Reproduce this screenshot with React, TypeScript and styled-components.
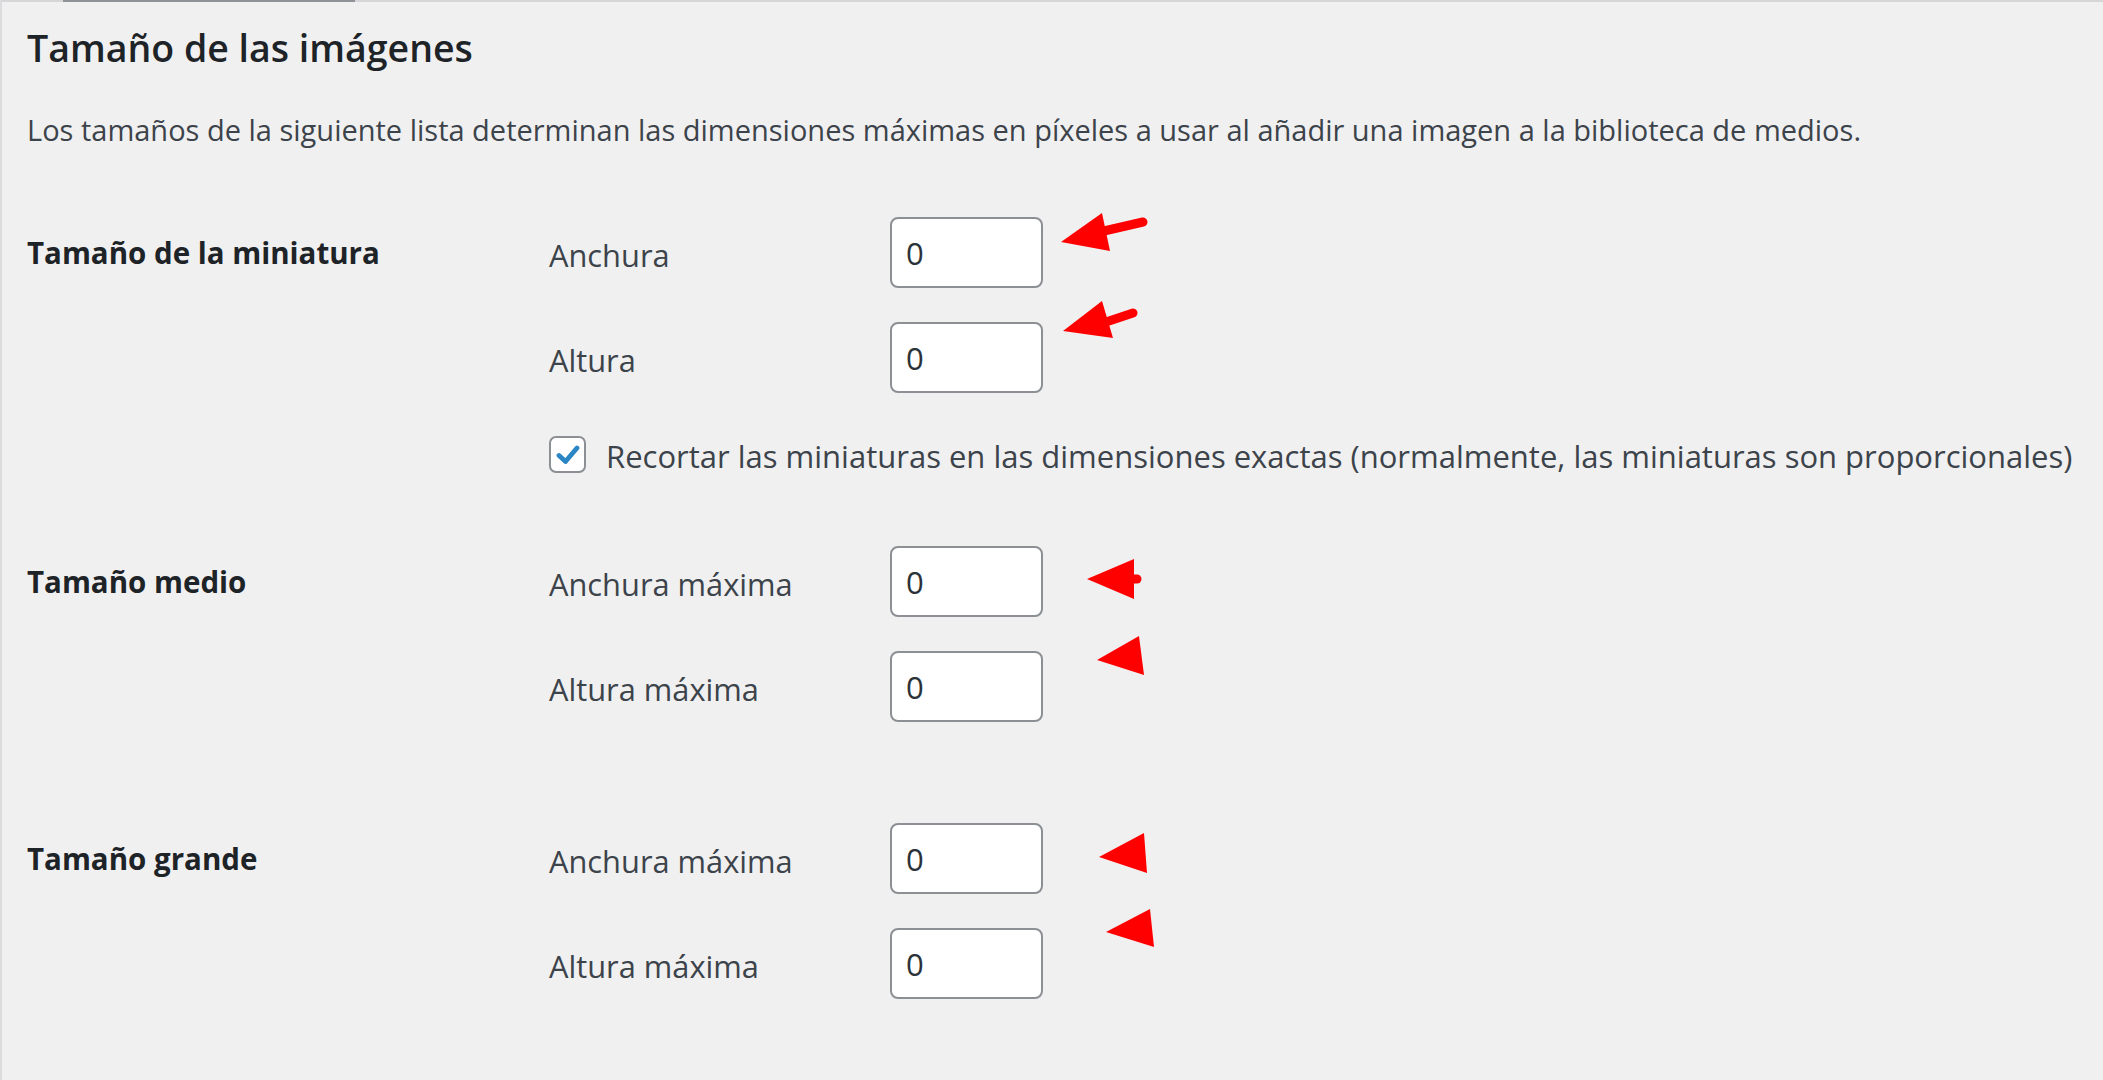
import React from "react";
import styled, { createGlobalStyle } from "styled-components";

const Global = createGlobalStyle`
  html, body { margin: 0; padding: 0; background: #f0f0f1; }
  * { box-sizing: border-box; }
`;

const Page = styled.div`
  position: relative;
  width: 2103px;
  height: 1080px;
  overflow: hidden;
  background: #f0f0f1;
  border-left: 2px solid #dcdcde;
  font-family: "Open Sans", "Noto Sans", sans-serif;
  color: #3c434a;
`;

const TopEdge = styled.div`
  display: flex;
  height: 2px;
  background: #d6d6d8;
`;

const TabMark = styled.div`
  margin-left: 61px;
  width: 292px;
  background: #8f9296;
`;

const Content = styled.div`
  padding-left: 25px;
`;

const Title = styled.h2`
  margin: 21px 0 0;
  font-size: 37.5px;
  line-height: 50px;
  font-weight: 600;
  color: #1d2327;
`;

const Intro = styled.p`
  margin: 37px 0 0;
  font-size: 29px;
  line-height: 40px;
  color: #3c434a;
`;

const SettingRow = styled.section<{ $top: number }>`
  display: grid;
  grid-template-columns: 522px 1fr;
  margin-top: ${(p) => p.$top}px;
`;

const SettingLabel = styled.div`
  font-size: 29.5px;
  font-weight: 700;
  line-height: 71px;
  color: #1d2327;
`;

const Fields = styled.div`
  display: flex;
  flex-direction: column;
  gap: 34px;
`;

const Field = styled.label`
  display: flex;
  align-items: center;
`;

const FieldName = styled.span`
  width: 341px;
  font-size: 30.8px;
  line-height: 40px;
  padding-top: 5px;
  color: #3c434a;
`;

const NumberInput = styled.input`
  width: 153px;
  height: 71px;
  padding: 0 0 0 14px;
  border: 2px solid #8c8f94;
  border-radius: 8px;
  background: #fff;
  font-family: "Open Sans", "Noto Sans", sans-serif;
  font-size: 31px;
  color: #2c3338;
  outline: none;
`;

const CheckRow = styled.label`
  display: flex;
  align-items: center;
  gap: 20px;
  margin-top: 43px;
  height: 37px;
`;

const CheckBox = styled.span`
  display: flex;
  align-items: center;
  justify-content: center;
  flex: none;
  width: 37px;
  height: 37px;
  border: 2px solid #8c8f94;
  border-radius: 7px;
  background: #fff;
`;

const CheckText = styled.span`
  font-size: 31px;
  line-height: 40px;
  padding-top: 3px;
  color: #3c434a;
  white-space: nowrap;
`;

const Annotations = styled.svg`
  position: absolute;
  left: 0;
  top: 0;
  pointer-events: none;
`;

const Arrow: React.FC<{ pts: string; shaft?: [number, number, number, number] }> = ({ pts, shaft }) => (
  <g fill="#ff0000" stroke="#ff0000">
    <polygon points={pts} stroke="none" />
    {shaft && (
      <line x1={shaft[0]} y1={shaft[1]} x2={shaft[2]} y2={shaft[3]} strokeWidth={9} strokeLinecap="round" />
    )}
  </g>
);

type FieldDef = { name: string; value: string };

const Setting: React.FC<{ label: string; top: number; fields: FieldDef[]; crop?: boolean }> = ({
  label,
  top,
  fields,
  crop,
}) => (
  <SettingRow $top={top}>
    <SettingLabel>{label}</SettingLabel>
    <div>
      <Fields>
        {fields.map((f) => (
          <Field key={f.name}>
            <FieldName>{f.name}</FieldName>
            <NumberInput type="text" defaultValue={f.value} />
          </Field>
        ))}
      </Fields>
      {crop && (
        <CheckRow>
          <CheckBox>
            <svg width="24" height="20" viewBox="0 0 24 20">
              <path d="M3 10.5 L9.5 16.5 L21 3" fill="none" stroke="#2a86c4" strokeWidth="4.8" strokeLinecap="round" strokeLinejoin="round" />
            </svg>
          </CheckBox>
          <CheckText>
            Recortar las miniaturas en las dimensiones exactas (normalmente, las miniaturas son proporcionales)
          </CheckText>
        </CheckRow>
      )}
    </div>
  </SettingRow>
);

export default function App() {
  return (
    <>
      <Global />
      <Page>
        <TopEdge>
          <TabMark />
        </TopEdge>
        <Content>
          <Title>Tamaño de las imágenes</Title>
          <Intro>
            Los tamaños de la siguiente lista determinan las dimensiones máximas en píxeles a usar al añadir una imagen a la biblioteca de medios.
          </Intro>
          <Setting
            label="Tamaño de la miniatura"
            top={67}
            crop
            fields={[
              { name: "Anchura", value: "0" },
              { name: "Altura", value: "0" },
            ]}
          />
          <Setting
            label="Tamaño medio"
            top={73}
            fields={[
              { name: "Anchura máxima", value: "0" },
              { name: "Altura máxima", value: "0" },
            ]}
          />
          <Setting
            label="Tamaño grande"
            top={101}
            fields={[
              { name: "Anchura máxima", value: "0" },
              { name: "Altura máxima", value: "0" },
            ]}
          />
        </Content>
        <Annotations width="2103" height="1080" viewBox="0 0 2103 1080">
          <Arrow pts="1059,242 1100,213 1108,251" shaft={[1102, 231, 1141, 222]} />
          <Arrow pts="1061,331 1100,301 1111,338" shaft={[1104, 322, 1131, 313]} />
          <Arrow pts="1085,579 1132,559 1132,599" shaft={[1130, 579, 1135, 579]} />
          <Arrow pts="1095,660 1137,636 1142,675" />
          <Arrow pts="1097,857 1142,833 1145,873" />
          <Arrow pts="1104,932 1148,909 1152,947" />
        </Annotations>
      </Page>
    </>
  );
}
